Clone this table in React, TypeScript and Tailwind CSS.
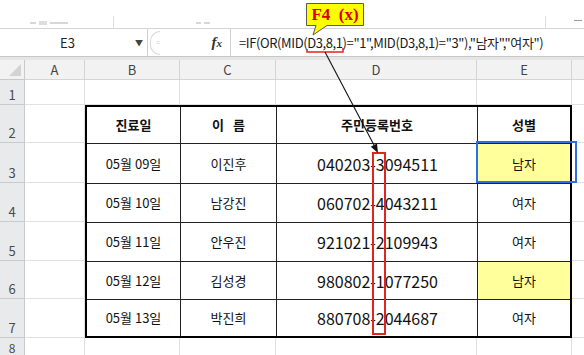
import React from 'react';

const FONT = { fontFamily: '"Noto Sans CJK KR", "Noto Sans", sans-serif' };

const COLS = ['A', 'B', 'C', 'D', 'E'];

const ROWS = [
  { date: '05월 09일', name: '이진후', id: '040203-3094511', sex: '남자', hl: true },
  { date: '05월 10일', name: '남강진', id: '060702-4043211', sex: '여자', hl: false },
  { date: '05월 11일', name: '안우진', id: '921021-2109943', sex: '여자', hl: false },
  { date: '05월 12일', name: '김성경', id: '980802-1077250', sex: '남자', hl: true },
  { date: '05월 13일', name: '박진희', id: '880708-2044687', sex: '여자', hl: false },
];

const ROW_H = ['h-[40px]', 'h-[39px]', 'h-[39px]', 'h-[38px]', 'h-[36px]'];

function RowHead({ n }: { n: number }) {
  return (
    <div className="bg-[#e9eaeb] border-r border-b border-[#c9cacb] flex items-end justify-center pb-[3px] text-[13px] leading-none text-[#4a4a4a]">
      {n}
    </div>
  );
}

function Blank({ last }: { last?: boolean }) {
  return <div className={`border-b border-[#e1e1e1] ${last ? '' : 'border-r'}`} />;
}

function Ribbon() {
  return (
    <div className="h-[29px] border-b border-[#d4d4d4] relative">
      {/* faded remnants of the ribbon group labels */}
      <div className="absolute top-[21px] left-[30px] flex gap-[3px] items-center opacity-60">
        <span className="w-[6px] h-[2px] bg-[#bdbdbd]" />
        <span className="w-[8px] h-[4px] bg-[#c8c8c8]" />
        <span className="w-[18px] h-[2px] bg-[#bdbdbd]" />
      </div>
      <div className="absolute top-[16px] left-[113px] w-px h-[13px] bg-[#dedede]" />
      <div className="absolute top-[22px] left-[196px] flex gap-[3px] opacity-60">
        <span className="w-[5px] h-[2px] bg-[#bdbdbd]" />
        <span className="w-[6px] h-[2px] bg-[#bdbdbd]" />
      </div>
      <div className="absolute top-[16px] left-[545px] w-px h-[13px] bg-[#dedede]" />
      <div className="absolute top-[20px] left-[574px] w-[8px] h-px bg-[#9a9a9a]" />
    </div>
  );
}

function FormulaBar() {
  return (
    <div className="h-[28px] flex border-b border-[#c6c6c6] bg-white">
      <div className="w-[148px] flex items-center border-r border-[#d0d0d0]">
        <span className="flex-1 text-center text-[13px] text-[#222]">E3</span>
        <span className="w-[12px] text-[8px] text-[#444]">▼</span>
      </div>
      <div className="w-[83px] flex items-center border-r border-[#cfcfcf] relative">
        <div className="ml-[2px] h-[24px] w-[10px] rounded-l-full border-l border-y border-[#d6d6d6] flex items-center justify-end">
          <span className="text-[7px] text-[#cfcfcf] leading-none">=</span>
        </div>
        <span
          className="ml-auto mr-[8px] text-[15px] italic font-bold text-[#333] leading-none"
          style={{ fontFamily: '"Liberation Serif", serif' }}
        >
          f<span className="text-[11px]">x</span>
        </span>
      </div>
      <div className="flex-1 flex items-center pl-[8px] text-[13px] tracking-[-0.4px] text-[#1a1a1a] whitespace-nowrap">
        =IF(OR(MID(D3,8,1)="1",MID(D3,8,1)="3"),"남자","여자")
      </div>
    </div>
  );
}

function Table() {
  return (
    <div className="col-start-3 col-span-4 row-start-3 row-span-6 border-2 border-black grid grid-cols-[94px_96px_201px_92px] text-[#111]">
      {['진료일', '이\u00a0\u00a0\u00a0름', '주민등록번호', '성별'].map((h, i) => (
        <div
          key={h}
          className={`h-[37px] border-b border-[#222] ${i < 3 ? 'border-r' : ''} flex items-center justify-center text-[13px] font-bold`}
        >
          {h}
        </div>
      ))}
      {ROWS.map((r, ri) => {
        const bb = ri < 4 ? 'border-b border-[#222]' : 'border-[#222]';
        return (
          <React.Fragment key={r.id}>
            <div className={`${ROW_H[ri]} ${bb} border-r flex items-center justify-center text-[13px]`}>{r.date}</div>
            <div className={`${ROW_H[ri]} ${bb} border-r flex items-center justify-center text-[13px]`}>{r.name}</div>
            <div className={`${ROW_H[ri]} ${bb} border-r flex items-center justify-center text-[16px] pl-[1px]`}>{r.id}</div>
            <div
              className={`${ROW_H[ri]} ${bb} flex items-center justify-center text-[13px] ${r.hl ? 'bg-[#ffff9c]' : ''}`}
            >
              {r.sex}
            </div>
          </React.Fragment>
        );
      })}
    </div>
  );
}

function Sheet() {
  return (
    <div className="grid grid-cols-[25px_60px_95px_96px_201px_95px_12px] grid-rows-[20px_25px_38px_40px_39px_39px_38px_39px_17px]">
      <Table />
      {/* column headers */}
      <div className="bg-[#f2f2f2] border-r border-b border-[#c9c9c9] relative">
        <svg className="absolute right-[3px] bottom-[3px]" width="12" height="12" viewBox="0 0 12 12">
          <polygon points="12,0 12,12 0,12" fill="#d3d3d3" />
        </svg>
      </div>
      {COLS.map((c) => (
        <div
          key={c}
          className="bg-[#f2f2f2] border-r border-b border-[#d4d4d4] flex items-center justify-center text-[13px] text-[#444]"
        >
          {c}
        </div>
      ))}
      <div className="bg-[#f2f2f2] border-b border-[#d4d4d4]" />

      {/* row 1 */}
      <RowHead n={1} />
      {[0, 1, 2, 3, 4].map((i) => (
        <Blank key={i} />
      ))}
      <Blank last />

      {/* rows 2-7: only A and F are free, B..E belong to the table */}
      {[2, 3, 4, 5, 6, 7].map((n) => (
        <React.Fragment key={n}>
          <RowHead n={n} />
          <Blank />
          <Blank last />
        </React.Fragment>
      ))}

      {/* row 8, at the window edge */}
      <div className="bg-[#e9eaeb] border-r border-[#c9cacb] overflow-hidden flex justify-center pt-[4px] text-[12px] leading-none text-[#4a4a4a]">
        8
      </div>
      {[0, 1, 2, 3, 4].map((i) => (
        <div key={i} className="border-r border-[#e1e1e1]" />
      ))}
      <div />
    </div>
  );
}

function Overlays() {
  return (
    <>
      {/* selection around E3 */}
      <div className="absolute left-[476px] top-[141px] w-[101px] h-[42px] border-2 border-[#2c6fe0]" />
      {/* red box over the 8th digit */}
      <div className="absolute left-[372px] top-[152px] w-[14px] h-[183px] border-2 border-[#e3231e]" />

      <svg className="absolute inset-0 pointer-events-none" width="584" height="355" viewBox="0 0 584 355">
        {/* callout */}
        <path d="M306.5 3.5 H363.5 V25.5 H327 L313 35 L316 25.5 H306.5 Z" fill="#ffff00" stroke="#5a5a5a" strokeWidth="1" />
        {/* underline under D3,8,1 */}
        <polyline points="307,49 307,52 343,52 343,48" fill="none" stroke="#e3231e" strokeWidth="1.5" />
        {/* pointer arrow */}
        <line x1="325" y1="52" x2="374.5" y2="146" stroke="#111" strokeWidth="1.1" />
        <polygon points="378,153 370.8,146.8 377,143.5" fill="#111" />
      </svg>

      <div
        className="absolute left-[306px] top-[3px] w-[58px] h-[23px] flex items-center justify-center text-[17px] font-bold text-[#d40000] whitespace-pre"
        style={{ fontFamily: '"Liberation Serif", serif' }}
      >
        F4  (x)
      </div>
    </>
  );
}

export default function App() {
  return (
    <div className="relative w-[584px] h-[355px] overflow-hidden bg-white" style={FONT}>
      <Ribbon />
      <FormulaBar />
      <div className="h-[3px] bg-[#e6e6e6]" />
      <Sheet />
      <Overlays />
    </div>
  );
}
